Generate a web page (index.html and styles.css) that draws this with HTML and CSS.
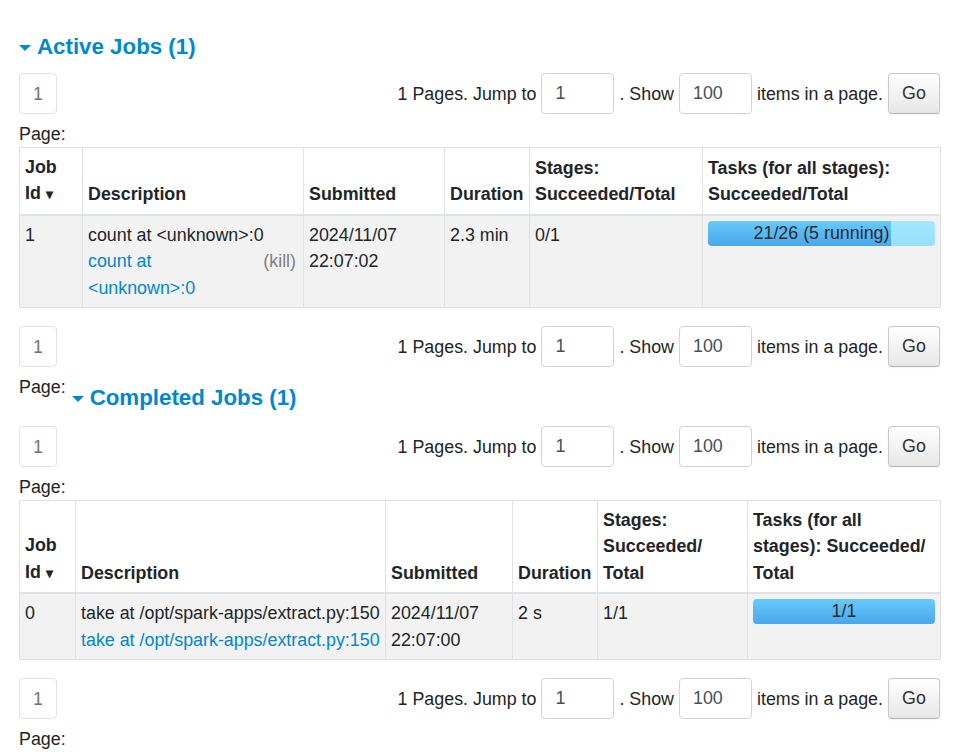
FILE: index.html
```html
<!DOCTYPE html>
<html lang="en">
<head>
<meta charset="utf-8">
<title>Spark Jobs</title>
<link rel="stylesheet" href="styles.css">
</head>
<body>
<div class="page">
  <h4 class="section-title first"><span class="arrow-open"></span><a class="title-link">Active Jobs (1)</a></h4>

  <div class="pager">
    <ul class="pagination"><li class="page-item"><a class="page-link">1</a></li></ul>
    <form class="pager-form">
      <span>1 Pages. Jump to</span>
      <input class="form-control" type="text" value="1">
      <span>. Show</span>
      <input class="form-control" type="text" value="100">
      <span>items in a page.</span>
      <button class="btn" type="button">Go</button>
    </form>
  </div>
  <div class="page-label">Page:</div>

  <table class="jobs jobs-active">
    <colgroup>
      <col class="a-id"><col class="a-desc"><col class="a-sub"><col class="a-dur"><col class="a-stg"><col class="a-tsk">
    </colgroup>
    <thead>
      <tr>
        <th>Job Id&nbsp;<span class="sort">&#x25BE;</span></th>
        <th>Description</th>
        <th>Submitted</th>
        <th>Duration</th>
        <th>Stages: Succeeded/Total</th>
        <th>Tasks (for all stages): Succeeded/Total</th>
      </tr>
    </thead>
    <tbody>
      <tr>
        <td>1</td>
        <td>
          <div class="desc-input">count at &lt;unknown&gt;:0</div>
          <a class="kill-link">(kill)</a>
          <a class="name-link">count at &lt;unknown&gt;:0</a>
        </td>
        <td>2024/11/07 22:07:02</td>
        <td>2.3 min</td>
        <td>0/1</td>
        <td>
          <div class="progress">
            <span class="progress-text">21/26 (5 running)</span>
            <div class="bar bar-completed" style="width: 80.77%"></div>
            <div class="bar bar-started" style="width: 19.23%"></div>
          </div>
        </td>
      </tr>
    </tbody>
  </table>

  <div class="pager">
    <ul class="pagination"><li class="page-item"><a class="page-link">1</a></li></ul>
    <form class="pager-form">
      <span>1 Pages. Jump to</span>
      <input class="form-control" type="text" value="1">
      <span>. Show</span>
      <input class="form-control" type="text" value="100">
      <span>items in a page.</span>
      <button class="btn" type="button">Go</button>
    </form>
  </div>
  <div class="label-row">
    <div class="page-label">Page:</div>
    <h4 class="section-title second"><span class="arrow-open"></span><a class="title-link">Completed Jobs (1)</a></h4>
  </div>

  <div class="pager">
    <ul class="pagination"><li class="page-item"><a class="page-link">1</a></li></ul>
    <form class="pager-form">
      <span>1 Pages. Jump to</span>
      <input class="form-control" type="text" value="1">
      <span>. Show</span>
      <input class="form-control" type="text" value="100">
      <span>items in a page.</span>
      <button class="btn" type="button">Go</button>
    </form>
  </div>
  <div class="page-label">Page:</div>

  <table class="jobs jobs-completed">
    <colgroup>
      <col class="c-id"><col class="c-desc"><col class="c-sub"><col class="c-dur"><col class="c-stg"><col class="c-tsk">
    </colgroup>
    <thead>
      <tr>
        <th>Job Id&nbsp;<span class="sort">&#x25BE;</span></th>
        <th>Description</th>
        <th>Submitted</th>
        <th>Duration</th>
        <th>Stages:<br>Succeeded/<br>Total</th>
        <th>Tasks (for all<br>stages): Succeeded/<br>Total</th>
      </tr>
    </thead>
    <tbody>
      <tr>
        <td>0</td>
        <td class="nowrap">
          <div class="desc-input">take at /opt/spark-apps/extract.py:150</div>
          <a class="name-link">take at /opt/spark-apps/extract.py:150</a>
        </td>
        <td>2024/11/07 22:07:00</td>
        <td>2 s</td>
        <td>1/1</td>
        <td>
          <div class="progress">
            <span class="progress-text">1/1</span>
            <div class="bar bar-completed" style="width: 100%"></div>
          </div>
        </td>
      </tr>
    </tbody>
  </table>

  <div class="pager">
    <ul class="pagination"><li class="page-item"><a class="page-link">1</a></li></ul>
    <form class="pager-form">
      <span>1 Pages. Jump to</span>
      <input class="form-control" type="text" value="1">
      <span>. Show</span>
      <input class="form-control" type="text" value="100">
      <span>items in a page.</span>
      <button class="btn" type="button">Go</button>
    </form>
  </div>
  <div class="page-label">Page:</div>
</div>
</body>
</html>
```

FILE: styles.css
```css
* { box-sizing: border-box; }

html, body {
  margin: 0;
  padding: 0;
  background: #fff;
}

body {
  font-family: "Liberation Sans", Arial, Helvetica, sans-serif;
  font-size: 17.85px;
  line-height: 26.4px;
  color: #212529;
}

.page {
  padding: 34px 19px 0 19px;
}

/* Section headings */
.section-title {
  display: flex;
  align-items: center;
  margin: 0 0 13px 0;
  font-size: 22.3px;
  line-height: 26px;
  font-weight: 700;
  color: #0088cc;
}

.section-title.second {
  margin: 11px 0 15px 6px;
}

.title-link {
  color: #0088cc;
  text-decoration: none;
}

.arrow-open {
  display: inline-block;
  width: 0;
  height: 0;
  border-left: 6px solid transparent;
  border-right: 6px solid transparent;
  border-top: 6px solid #0088cc;
  margin: 2px 6px 0 0;
}

.label-row {
  display: flex;
  align-items: flex-start;
}

/* Pager */
.pager {
  display: flex;
  justify-content: space-between;
  align-items: center;
  height: 41px;
  margin-bottom: 7px;
}

.pagination {
  list-style: none;
  margin: 0;
  padding: 0;
  display: flex;
}

.page-link {
  display: block;
  height: 41px;
  width: 38px;
  line-height: 40px;
  text-align: center;
  border: 1px solid #dee2e6;
  border-radius: 4px;
  color: #6c757d;
  background: #fff;
}

.pager-form {
  display: flex;
  align-items: center;
  gap: 5px;
  margin: 0;
  line-height: 28px;
}

.form-control {
  width: 73px;
  height: 41px;
  padding: 6px 13px;
  font-family: inherit;
  font-size: 17.85px;
  color: #495057;
  border: 1px solid #ced4da;
  border-radius: 4px;
  background: #fff;
  outline: none;
}

.btn {
  height: 41px;
  width: 52px;
  padding: 0;
  font-family: inherit;
  font-size: 17.85px;
  color: #333;
  border: 1px solid #c8c8c8;
  border-bottom-color: #b3b3b3;
  border-radius: 4px;
  background: linear-gradient(to bottom, #ffffff, #e6e6e6);
  box-shadow: inset 0 1px 0 rgba(255,255,255,.2), 0 1px 2px rgba(0,0,0,.05);
}

.page-label {
  line-height: 26px;
  color: #212529;
}

/* Tables */
.jobs {
  width: 100%;
  table-layout: fixed;
  border-collapse: collapse;
  margin-bottom: 18px;
}

.jobs th,
.jobs td {
  border: 1px solid #dee2e6;
  padding: 6px 5px;
  text-align: left;
}

.jobs th {
  vertical-align: bottom;
  font-weight: 700;
  color: #212529;
  border-bottom: 2px solid #dee2e6;
}

.jobs td {
  vertical-align: top;
}

.jobs tbody tr {
  background: #f2f2f2;
}

.sort {
  font-size: 14px;
}

.a-id { width: 63px; }
.a-desc { width: 221px; }
.a-sub { width: 141px; }
.a-dur { width: 85px; }
.a-stg { width: 173px; }
.a-tsk { width: 238px; }

.c-id { width: 56px; }
.c-desc { width: 310px; }
.c-sub { width: 127px; }
.c-dur { width: 85px; }
.c-stg { width: 150px; }
.c-tsk { width: 193px; }

.nowrap { white-space: nowrap; overflow: visible; }

.name-link {
  color: #0088cc;
  text-decoration: none;
}

.kill-link {
  float: right;
  margin-left: 20px;
  margin-right: 2px;
  color: #808080;
}

/* Progress */
.progress {
  position: relative;
  display: flex;
  height: 25px;
  margin-top: -1px;
  border-radius: 4px;
  overflow: hidden;
  background: #f5f5f5;
}

.bar {
  height: 100%;
}

.bar-completed {
  background: linear-gradient(to bottom, #66c9fa, #49a8e9);
}

.bar-started {
  background: linear-gradient(to bottom, #a4e8ff, #96dfff);
}

.progress-text {
  position: absolute;
  left: 0;
  right: 0;
  top: 0;
  line-height: 25px;
  text-align: center;
  color: #2a2a2a;
  z-index: 1;
}
```
